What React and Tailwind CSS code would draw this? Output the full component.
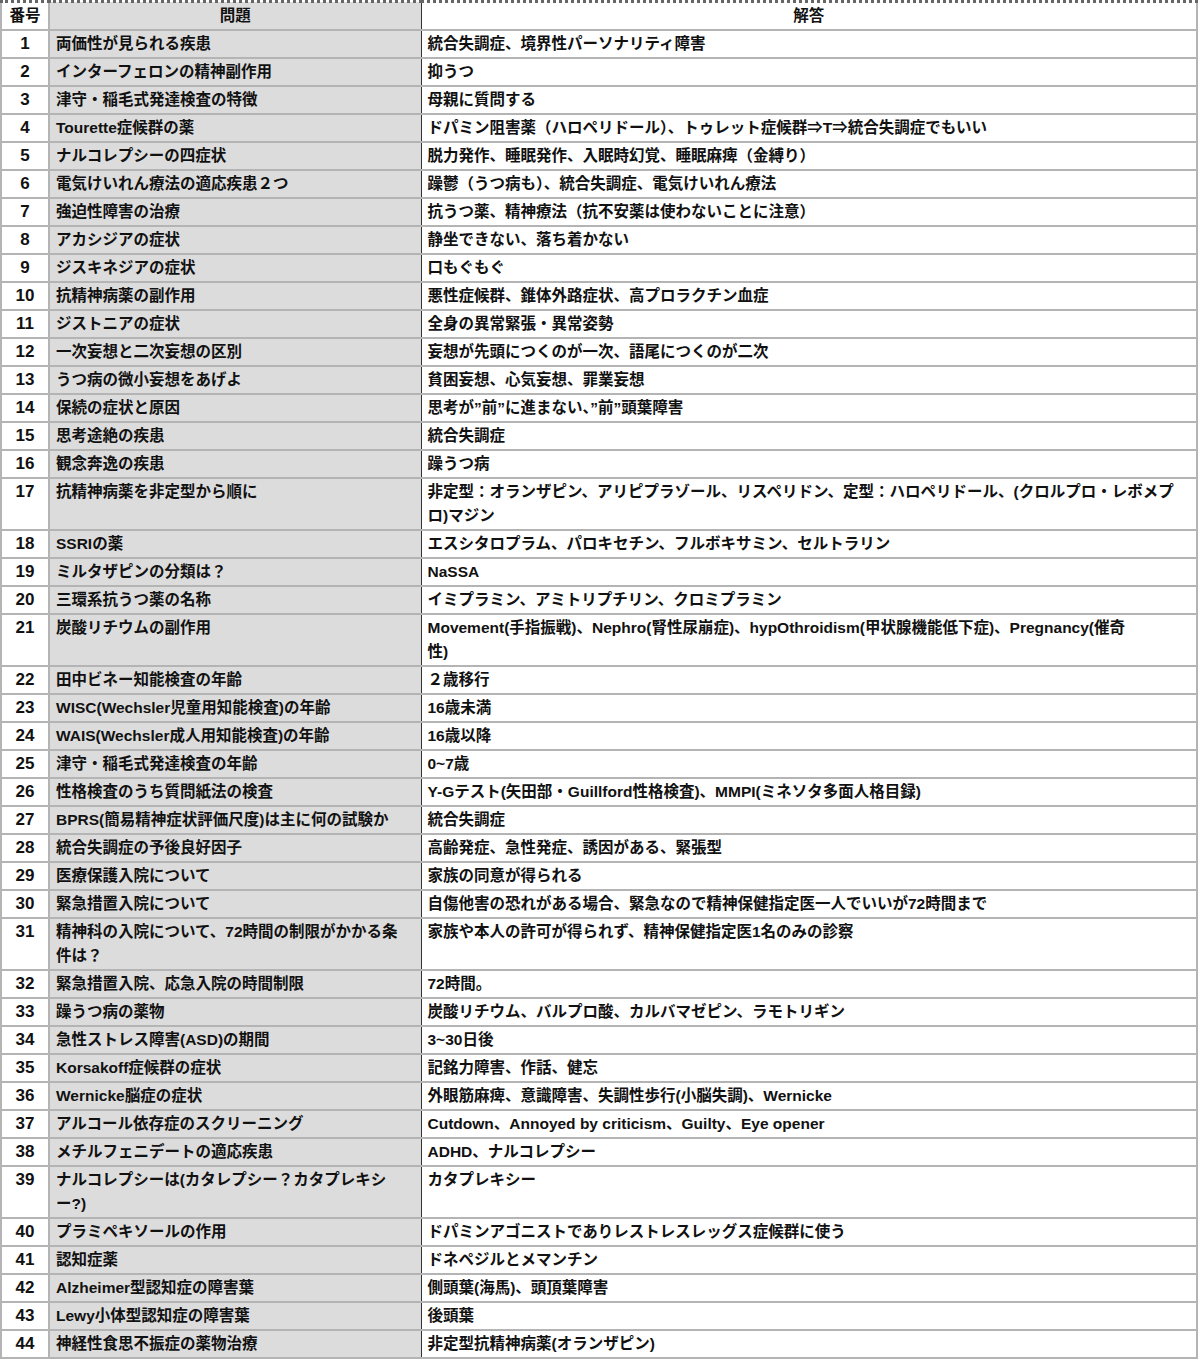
import React from 'react';

const rows = [
  ['両価性が見られる疾患', '統合失調症、境界性パーソナリティ障害'],
  ['インターフェロンの精神副作用', '抑うつ'],
  ['津守・稲毛式発達検査の特徴', '母親に質問する'],
  ['Tourette症候群の薬', 'ドパミン阻害薬（ハロペリドール）、トゥレット症候群⇒T⇒統合失調症でもいい'],
  ['ナルコレプシーの四症状', '脱力発作、睡眠発作、入眠時幻覚、睡眠麻痺（金縛り）'],
  ['電気けいれん療法の適応疾患２つ', '躁鬱（うつ病も）、統合失調症、電気けいれん療法'],
  ['強迫性障害の治療', '抗うつ薬、精神療法（抗不安薬は使わないことに注意）'],
  ['アカシジアの症状', '静坐できない、落ち着かない'],
  ['ジスキネジアの症状', '口もぐもぐ'],
  ['抗精神病薬の副作用', '悪性症候群、錐体外路症状、高プロラクチン血症'],
  ['ジストニアの症状', '全身の異常緊張・異常姿勢'],
  ['一次妄想と二次妄想の区別', '妄想が先頭につくのが一次、語尾につくのが二次'],
  ['うつ病の微小妄想をあげよ', '貧困妄想、心気妄想、罪業妄想'],
  ['保続の症状と原因', '思考が”前”に進まない、”前”頭葉障害'],
  ['思考途絶の疾患', '統合失調症'],
  ['観念奔逸の疾患', '躁うつ病'],
  ['抗精神病薬を非定型から順に', '非定型：オランザピン、アリピプラゾール、リスペリドン、定型：ハロペリドール、(クロルプロ・レボメプ\nロ)マジン'],
  ['SSRIの薬', 'エスシタロプラム、パロキセチン、フルボキサミン、セルトラリン'],
  ['ミルタザピンの分類は？', 'NaSSA'],
  ['三環系抗うつ薬の名称', 'イミプラミン、アミトリプチリン、クロミプラミン'],
  ['炭酸リチウムの副作用', 'Movement(手指振戦)、Nephro(腎性尿崩症)、hypOthroidism(甲状腺機能低下症)、Pregnancy(催奇\n性)'],
  ['田中ビネー知能検査の年齢', '２歳移行'],
  ['WISC(Wechsler児童用知能検査)の年齢', '16歳未満'],
  ['WAIS(Wechsler成人用知能検査)の年齢', '16歳以降'],
  ['津守・稲毛式発達検査の年齢', '0~7歳'],
  ['性格検査のうち質問紙法の検査', 'Y-Gテスト(矢田部・Guillford性格検査)、MMPI(ミネソタ多面人格目録)'],
  ['BPRS(簡易精神症状評価尺度)は主に何の試験か', '統合失調症'],
  ['統合失調症の予後良好因子', '高齢発症、急性発症、誘因がある、緊張型'],
  ['医療保護入院について', '家族の同意が得られる'],
  ['緊急措置入院について', '自傷他害の恐れがある場合、緊急なので精神保健指定医一人でいいが72時間まで'],
  ['精神科の入院について、72時間の制限がかかる条\n件は？', '家族や本人の許可が得られず、精神保健指定医1名のみの診察'],
  ['緊急措置入院、応急入院の時間制限', '72時間。'],
  ['躁うつ病の薬物', '炭酸リチウム、バルプロ酸、カルバマゼピン、ラモトリギン'],
  ['急性ストレス障害(ASD)の期間', '3~30日後'],
  ['Korsakoff症候群の症状', '記銘力障害、作話、健忘'],
  ['Wernicke脳症の症状', '外眼筋麻痺、意識障害、失調性歩行(小脳失調)、Wernicke'],
  ['アルコール依存症のスクリーニング', 'Cutdown、Annoyed by criticism、Guilty、Eye opener'],
  ['メチルフェニデートの適応疾患', 'ADHD、ナルコレプシー'],
  ['ナルコレプシーは(カタレプシー？カタプレキシ\nー?)', 'カタプレキシー'],
  ['プラミペキソールの作用', 'ドパミンアゴニストでありレストレスレッグス症候群に使う'],
  ['認知症薬', 'ドネペジルとメマンチン'],
  ['Alzheimer型認知症の障害葉', '側頭葉(海馬)、頭頂葉障害'],
  ['Lewy小体型認知症の障害葉', '後頭葉'],
  ['神経性食思不振症の薬物治療', '非定型抗精神病薬(オランザピン)'],
];

export default function App() {
  return (
    <div
      className="w-[1200px] bg-white text-[15.5px] leading-[24px] font-semibold text-[#111]"
      style={{ fontFamily: '"Liberation Sans", "Noto Sans CJK JP", sans-serif' }}
    >
      <table className="w-[1198px] border-collapse table-fixed border-t-[3px] border-dotted border-[#666]">
        <colgroup>
          <col className="w-[48px]" />
          <col className="w-[372px]" />
          <col />
        </colgroup>
        <thead>
          <tr className="border-b-2 border-[#b4b4b4]">
            <th className="border-l-2 border-r-2 border-[#b4b4b4] py-[1px] font-semibold text-center bg-white">番号</th>
            <th className="border-r border-[#333] py-[1px] font-semibold text-center bg-[#dcdcdc]">問題</th>
            <th className="border-r-2 border-[#b4b4b4] py-[1px] font-semibold text-center bg-white">解答</th>
          </tr>
        </thead>
        <tbody>
          {rows.map(([q, a], i) => (
            <tr key={i} className="border-b-2 border-[#b4b4b4] align-top">
              <td className="border-l-2 border-r-2 border-[#b4b4b4] py-[1px] text-center text-[17px] bg-white">{i + 1}</td>
              <td className="border-r border-[#333] py-[1px] px-[6px] bg-[#dcdcdc] whitespace-pre-line">{q}</td>
              <td className="border-r-2 border-[#b4b4b4] py-[1px] px-[6px] bg-white whitespace-pre-line">{a}</td>
            </tr>
          ))}
        </tbody>
      </table>
    </div>
  );
}
